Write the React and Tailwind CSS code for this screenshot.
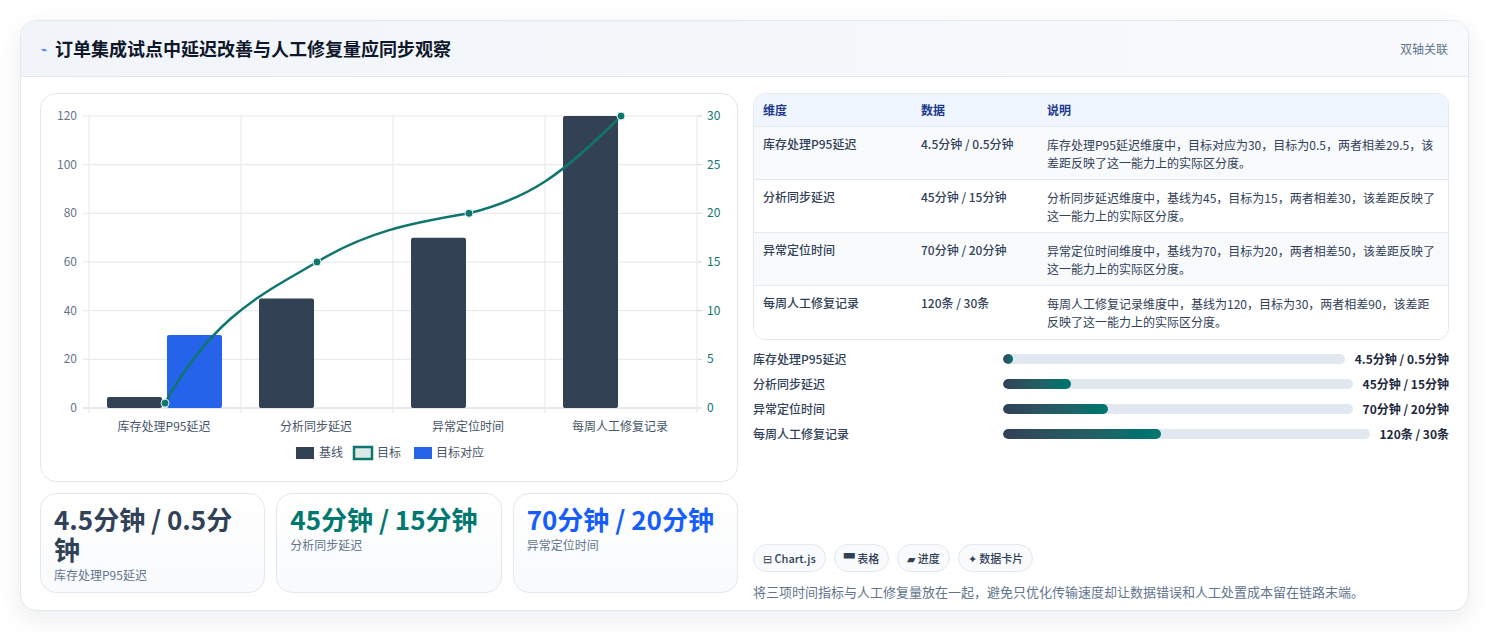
const F = { fontFamily: '"Noto Sans CJK SC","Noto Sans",sans-serif' };

function Chart() {
  const ox = 40, oy = 93;
  const X = (x) => x - ox, Y = (y) => y - oy;
  const yL = (v) => Y(407 - (v / 120) * 292);
  const yR = (v) => Y(407 - (v / 30) * 292);
  const cats = ['库存处理P95延迟', '分析同步延迟', '异常定位时间', '每周人工修复记录'];
  const base = [4.5, 45, 70, 120];
  const tgt = [0.5, 15, 20, 30];
  const cx = [164, 316, 468, 620];
  const pts = cx.map((c, i) => [X(c), yR(tgt[i])]);
  const d = `M${pts[0][0]},${pts[0][1]} C${pts[0][0] + 50},${pts[0][1] - 90} ${pts[1][0] - 50},${pts[1][1] + 30} ${pts[1][0]},${pts[1][1]} C${pts[1][0] + 50},${pts[1][1] - 30} ${pts[2][0] - 60},${pts[2][1] + 10} ${pts[2][0]},${pts[2][1]} C${pts[2][0] + 60},${pts[2][1] - 15} ${pts[3][0] - 60},${pts[3][1] + 60} ${pts[3][0]},${pts[3][1]}`;
  return (
    <svg width="697" height="388" className="block" style={F}>
      {[0, 20, 40, 60, 80, 100, 120].map((v) => (
        <g key={v}>
          <line x1={X(82)} x2={X(696)} y1={yL(v)} y2={yL(v)} stroke={v === 0 ? '#cbd5e1' : '#e5e7eb'} />
          <text x={X(76)} y={yL(v) + 4} textAnchor="end" fontSize="12" fill="#64748b">{v}</text>
        </g>
      ))}
      {[0, 5, 10, 15, 20, 25, 30].map((v) => (
        <g key={v}>
          <line x1={X(696)} x2={X(701)} y1={yR(v)} y2={yR(v)} stroke="#cbd5e1" />
          <text x={X(706)} y={yR(v) + 4} fontSize="12" fill="#0f766e">{v}</text>
        </g>
      ))}
      {[88, 240, 392, 544, 696].map((x) => (
        <line key={x} x1={X(x)} x2={X(x)} y1={Y(115)} y2={Y(412)} stroke="#e5e7eb" />
      ))}
      {base.map((v, i) => (
        <rect key={i} x={X(i === 0 ? 106 : cx[i] - 58)} y={yL(v)} width="55" height={Y(407) - yL(v)} fill="#334155" rx="2" />
      ))}
      <rect x={X(166)} y={yL(30)} width="55" height={Y(407) - yL(30)} fill="#2563eb" rx="2" />
      <path d={d} fill="none" stroke="#0f766e" strokeWidth="2.5" />
      {pts.map((p, i) => (
        <circle key={i} cx={p[0]} cy={p[1]} r="4" fill="#0f766e" stroke="#e6f2f0" strokeWidth="1" />
      ))}
      {cats.map((c, i) => (
        <text key={c} x={X(cx[i] - 1)} y={Y(430)} textAnchor="middle" fontSize="12" fill="#475569">{c}</text>
      ))}
      <g fontSize="12" fill="#475569">
        <rect x={X(295)} y={Y(446)} width="18" height="12" fill="#334155" />
        <text x={X(318)} y={Y(456)}>基线</text>
        <rect x={X(353)} y={Y(446)} width="18" height="12" fill="#dbe9e7" stroke="#0f766e" strokeWidth="2.5" />
        <text x={X(376)} y={Y(456)}>目标</text>
        <rect x={X(413)} y={Y(446)} width="18" height="12" fill="#2563eb" />
        <text x={X(435)} y={Y(456)}>目标对应</text>
      </g>
    </svg>
  );
}

const rows = [
  ['库存处理P95延迟', '4.5分钟 / 0.5分钟', '库存处理P95延迟维度中，目标对应为30，目标为0.5，两者相差29.5，该差距反映了这一能力上的实际区分度。'],
  ['分析同步延迟', '45分钟 / 15分钟', '分析同步延迟维度中，基线为45，目标为15，两者相差30，该差距反映了这一能力上的实际区分度。'],
  ['异常定位时间', '70分钟 / 20分钟', '异常定位时间维度中，基线为70，目标为20，两者相差50，该差距反映了这一能力上的实际区分度。'],
  ['每周人工修复记录', '120条 / 30条', '每周人工修复记录维度中，基线为120，目标为30，两者相差90，该差距反映了这一能力上的实际区分度。'],
];
const bars = [
  ['库存处理P95延迟', '4.5分钟 / 0.5分钟', 3],
  ['分析同步延迟', '45分钟 / 15分钟', 19.5],
  ['异常定位时间', '70分钟 / 20分钟', 30],
  ['每周人工修复记录', '120条 / 30条', 43],
];

export default function App() {
  return (
    <div className="min-h-screen bg-white pt-5 px-5" style={F}>
      <div className="w-[1449px] h-[591px] rounded-2xl border border-slate-200 bg-white shadow-[0_8px_24px_rgba(15,23,42,0.08)] overflow-hidden">
        <div className="h-[56px] flex items-center justify-between px-5 bg-gradient-to-r from-slate-100 to-slate-50 border-b border-slate-200">
          <div className="flex items-center gap-2">
            <span className="text-[10px] text-blue-600">⌁</span>
            <span className="text-[18px] font-bold text-slate-900">订单集成试点中延迟改善与人工修复量应同步观察</span>
          </div>
          <span className="text-xs text-slate-500">双轴关联</span>
        </div>
        <div className="flex gap-[15px] px-[19px] pt-4">
          <div className="w-[698px] flex flex-col gap-[11px]">
            <div className="h-[389px] rounded-2xl border border-slate-200 bg-white overflow-hidden"><Chart /></div>
            <div className="grid grid-cols-3 gap-[11px]">
              {[
                ['4.5分钟 / 0.5分钟', '库存处理P95延迟', 'text-slate-700'],
                ['45分钟 / 15分钟', '分析同步延迟', 'text-teal-700'],
                ['70分钟 / 20分钟', '异常定位时间', 'text-blue-600'],
              ].map(([v, l, c]) => (
                <div key={l} className="h-[100px] rounded-2xl border border-slate-200 bg-gradient-to-b from-white to-slate-50 px-[13px] pt-[10px]">
                  <div className={`text-[26px] leading-[30px] font-bold ${c}`}>{v}</div>
                  <div className="text-xs text-slate-500 mt-[3px]">{l}</div>
                </div>
              ))}
            </div>
          </div>
          <div className="w-[698px] flex flex-col">
            <div className="rounded-xl border border-slate-200 overflow-hidden text-xs text-slate-700">
              <div className="flex h-[33px] items-center bg-blue-50 border-b border-slate-200 font-semibold text-blue-900">
                <div className="w-[167px] pl-[9px]">维度</div><div className="w-[126px]">数据</div><div className="flex-1">说明</div>
              </div>
              {rows.map((r, i) => (
                <div key={i} className={`flex h-[53px] pt-[9px] ${i % 2 ? 'bg-white' : 'bg-slate-50'} ${i < 3 ? 'border-b border-slate-200' : ''}`}>
                  <div className="w-[167px] pl-[9px] font-medium">{r[0]}</div>
                  <div className="w-[126px] font-medium">{r[1]}</div>
                  <div className="flex-1 pr-2 leading-[18px]">{r[2]}</div>
                </div>
              ))}
            </div>
            <div className="flex flex-col gap-[7px] mt-[10px]">
              {bars.map(([l, v, p]) => (
                <div key={l} className="flex items-center gap-[10px] h-[18px] text-xs">
                  <div className="w-[240px] text-slate-700 font-medium">{l}</div>
                  <div className="flex-1 h-[10px] rounded-full bg-slate-200 overflow-hidden">
                    <div className="h-full rounded-full bg-gradient-to-r from-slate-700 to-teal-700" style={{ width: `${p}%`, minWidth: 10 }} />
                  </div>
                  <div className="font-bold text-slate-800">{v}</div>
                </div>
              ))}
            </div>
            <div className="flex gap-2 mt-[101px]">
              {['⊟ Chart.js', '▀ 表格', '▰ 进度', '✦ 数据卡片'].map((c) => (
                <span key={c} className="h-[28px] px-[9px] flex items-center rounded-full border border-slate-200 bg-slate-50 text-[11px] font-medium text-slate-700">{c}</span>
              ))}
            </div>
            <div className="text-[13px] text-slate-500 mt-[10px]">将三项时间指标与人工修复量放在一起，避免只优化传输速度却让数据错误和人工处置成本留在链路末端。</div>
          </div>
        </div>
      </div>
    </div>
  );
}
